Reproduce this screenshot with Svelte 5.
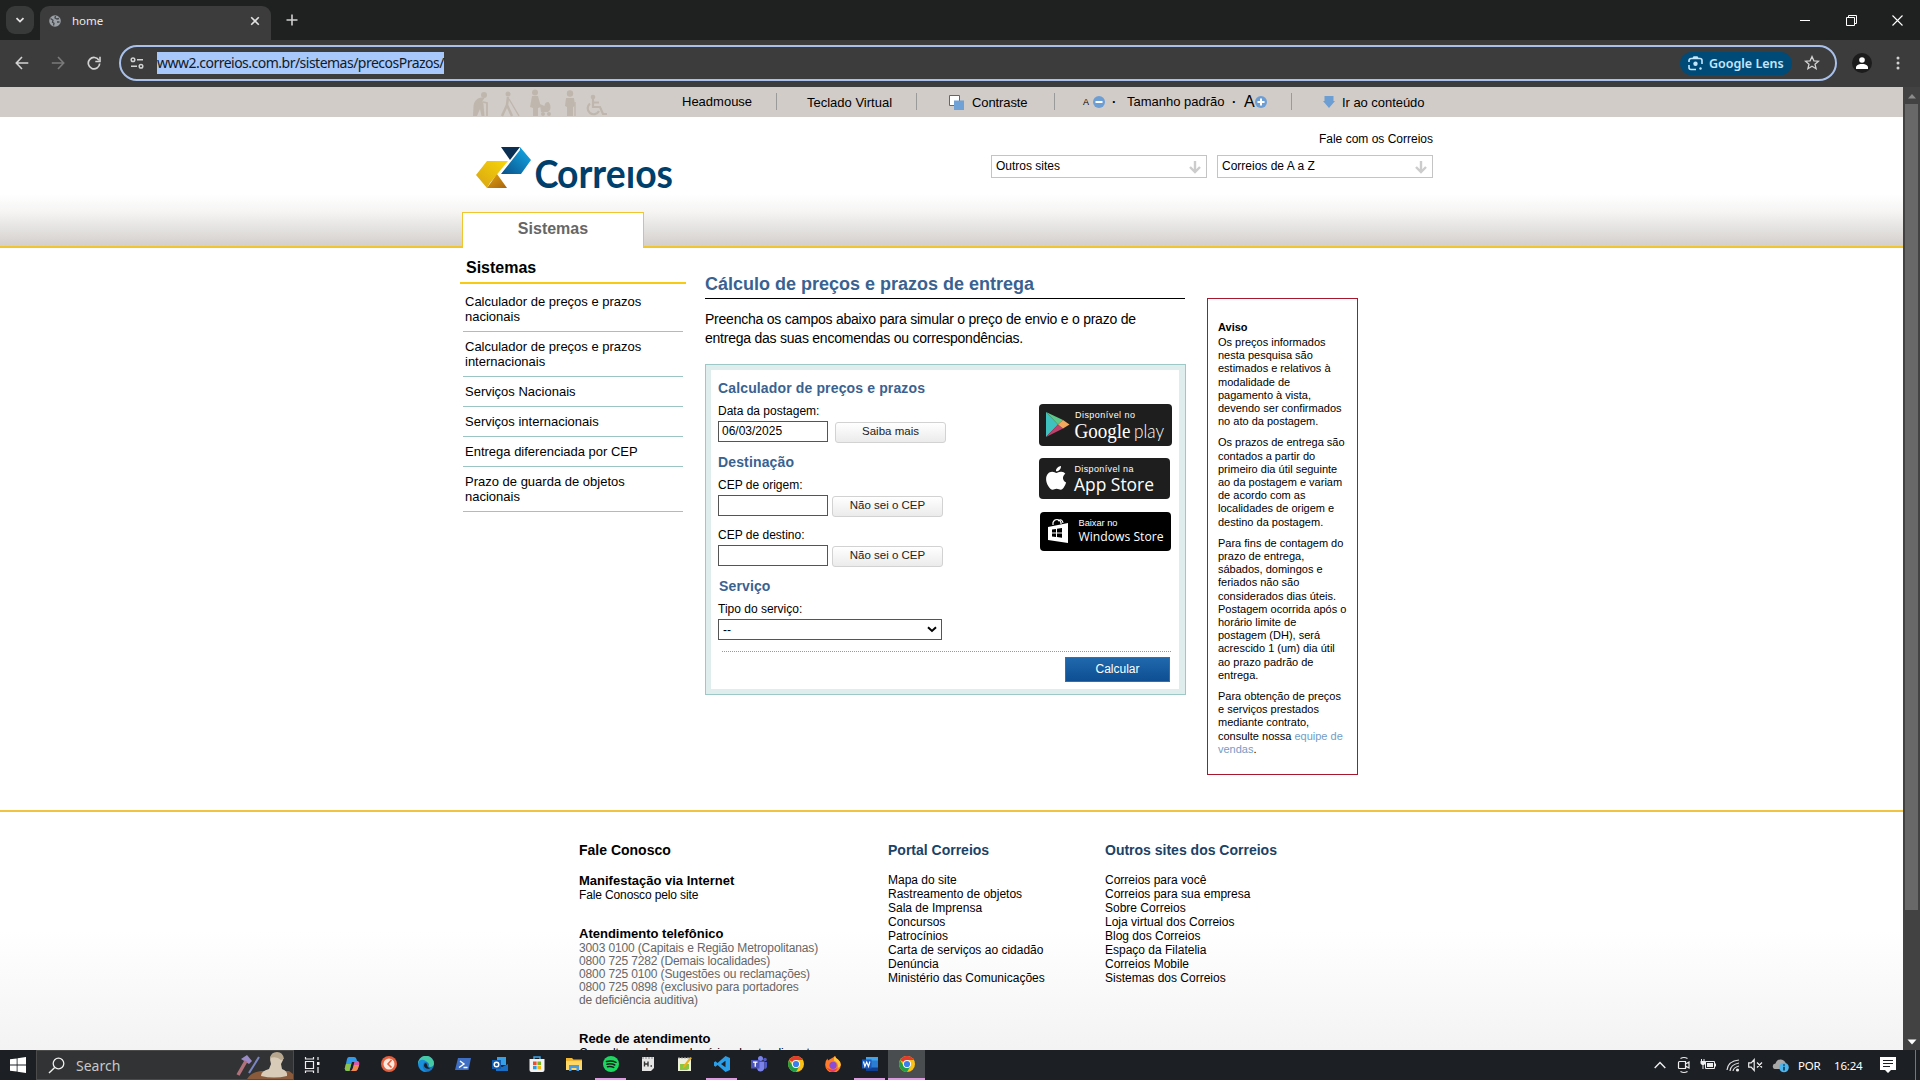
<script>
  const menu = [
    ['Calculador de preços e prazos', 'nacionais'],
    ['Calculador de preços e prazos', 'internacionais'],
    ['Serviços Nacionais'],
    ['Serviços internacionais'],
    ['Entrega diferenciada por CEP'],
    ['Prazo de guarda de objetos', 'nacionais']
  ];
  const notice = [
    ['Os preços informados', 'nesta pesquisa são', 'estimados e relativos à', 'modalidade de', 'pagamento à vista,', 'devendo ser confirmados', 'no ato da postagem.'],
    ['Os prazos de entrega são', 'contados a partir do', 'primeiro dia útil seguinte', 'ao da postagem e variam', 'de acordo com as', 'localidades de origem e', 'destino da postagem.'],
    ['Para fins de contagem do', 'prazo de entrega,', 'sábados, domingos e', 'feriados não são', 'considerados dias úteis.', 'Postagem ocorrida após o', 'horário limite de', 'postagem (DH), será', 'acrescido 1 (um) dia útil', 'ao prazo padrão de', 'entrega.']
  ];
  const phones = ['3003 0100 (Capitais e Região Metropolitanas)', '0800 725 7282 (Demais localidades)', '0800 725 0100 (Sugestões ou reclamações)', '0800 725 0898 (exclusivo para portadores', 'de deficiência auditiva)'];
  const portal = ['Mapa do site', 'Rastreamento de objetos', 'Sala de Imprensa', 'Concursos', 'Patrocínios', 'Carta de serviços ao cidadão', 'Denúncia', 'Ministério das Comunicações'];
  const others = ['Correios para você', 'Correios para sua empresa', 'Sobre Correios', 'Loja virtual dos Correios', 'Blog dos Correios', 'Espaço da Filatelia', 'Correios Mobile', 'Sistemas dos Correios'];
  const apps = [
    { id: 'copilot' }, { id: 'clock' }, { id: 'edge' }, { id: 'shell' }, { id: 'outlook' }, { id: 'store' },
    { id: 'files' }, { id: 'spotify', open: true }, { id: 'hnote' }, { id: 'npp' }, { id: 'code', open: true },
    { id: 'teams' }, { id: 'chrome' }, { id: 'firefox' }, { id: 'word', open: true }, { id: 'chrome', active: true }
  ];
</script>

{#snippet lines(list)}
  {#each list as line, i}{#if i}<br />{/if}{line}{/each}
{/snippet}

<div class="screen">
  <div class="tabs">
    <div class="tabsearch">
      <svg width="10" height="10" viewBox="0 0 10 10"><path d="M1.5 3.2 5 6.6 8.5 3.2" fill="none" stroke="#e3e3e3" stroke-width="1.8" /></svg>
    </div>
    <div class="tab">
      <svg class="globe" width="12" height="12" viewBox="0 0 12 12"><circle cx="6" cy="6" r="5.8" fill="#9aa0a6" /><path d="M1.500 3.500 4 5.200l-.5 2 1.500 1-.5 2.300M6.500 1 6 3l2 1 2-.5M8 7h2.500" fill="none" stroke="#46494c" stroke-width="1.300" /></svg>
      <span class="tabname">home</span>
      <svg width="10" height="10" viewBox="0 0 10 10"><path d="M1.2 1.2l7.6 7.6M8.8 1.2 1.2 8.8" stroke="#e3e3e3" stroke-width="1.6" /></svg>
    </div>
    <svg class="plus" width="12" height="12" viewBox="0 0 12 12"><path d="M6 .5v11M.5 6h11" stroke="#d0d0d0" stroke-width="1.6" /></svg>
    <div class="winbtns">
      <svg width="10" height="11" viewBox="0 0 10 11"><path d="M0 5.5h10" stroke="#fff" /></svg>
      <svg width="11" height="11" viewBox="0 0 11 11"><path d="M.5 2.5h8v8h-8zM2.5 2.5v-2h8v8h-2" fill="none" stroke="#fff" /></svg>
      <svg width="11" height="11" viewBox="0 0 11 11"><path d="M.5.5l10 10M10.5.5l-10 10" stroke="#fff" stroke-width="1.1" /></svg>
    </div>
  </div>

  <div class="toolbar">
    <svg width="14" height="14" viewBox="0 0 14 14"><path d="M7 1 1.3 7 7 13M1.3 7h12" fill="none" stroke="#d2d2d2" stroke-width="1.6" /></svg>
    <svg width="14" height="14" viewBox="0 0 14 14"><path d="M7 1l5.700 6L7 13M12.700 7H.8" fill="none" stroke="#7a7a7a" stroke-width="1.6" /></svg>
    <svg width="14" height="14" viewBox="0 0 14 14"><path d="M12 4.400A5.700 5.700 0 1 0 12.700 7.500" fill="none" stroke="#d2d2d2" stroke-width="1.7" /><path d="M13 .8v4.700H8.300" fill="none" stroke="#d2d2d2" stroke-width="1.6" /></svg>
    <div class="omnibox">
      <svg class="tune" width="14" height="12" viewBox="0 0 14 12"><g fill="none" stroke="#d2d2d2" stroke-width="1.5"><circle cx="3" cy="2.8" r="1.8" /><path d="M7 2.800h6M1 9.200h6" /><circle cx="11" cy="9.2" r="1.8" /></g></svg>
      <span class="url">www2.correios.com.br/sistemas/precosPrazos/</span>
      <div class="lens">
        <svg width="15" height="15" viewBox="0 0 15 15"><g fill="none" stroke="#c2e7ff" stroke-width="1.6"><path d="M1 6V4.500a2 2 0 0 1 2-2h9a2 2 0 0 1 2 2V8M5 2.500 6 1h3l1 1.500M1 9v2.500a2 2 0 0 0 2 2h5" /></g><circle cx="7.5" cy="7.8" r="2.2" fill="#c2e7ff" /><circle cx="12.5" cy="12.5" r="1.2" fill="#c2e7ff" /></svg>
        <span>Google Lens</span>
      </div>
      <svg width="16" height="16" viewBox="0 0 16 16"><path d="M8 1.600l1.900 4.200 4.600.4-3.500 3 1.100 4.500L8 11.300l-4.100 2.400L5 9.200l-3.500-3 4.600-.4z" fill="none" stroke="#d2d2d2" stroke-width="1.3" /></svg>
    </div>
    <div class="avatar"><svg width="12" height="12" viewBox="0 0 12 12" fill="#fff"><circle cx="6" cy="3" r="2.8" /><path d="M0 12V9.500C1.500 7.500 3.500 7 6 7s4.500.5 6 2.500V12z" /></svg></div>
    <svg class="dots" width="4" height="14" viewBox="0 0 4 14" fill="#d2d2d2"><circle cx="2" cy="2" r="1.5" /><circle cx="2" cy="7" r="1.5" /><circle cx="2" cy="12" r="1.5" /></svg>
  </div>

  <div class="view">
    <div class="page">
      <div class="access">
        <svg class="people" width="137" height="28" viewBox="0 0 137 28">
          <g fill="#bfb7ad">
            <circle cx="12" cy="6" r="3" /><path d="M9 8.500Q2 10 1.500 17L1 27h4l3-7 1.500 7h3l-1-12-1-3 2-3z" /><circle cx="36" cy="5" r="2.5" />
            <circle cx="63" cy="3.5" r="3" /><path d="M60 7h6l3 11-3 1v8h-5v-8l-3-1zM68 15l4.500 2q0-4 4-4 3 3 1.500 8l-2 2h-7z" /><circle cx="71" cy="25" r="2" /><circle cx="77" cy="25" r="2" />
            <circle cx="98" cy="4.5" r="3.2" /><path d="M94 9h8l1 8-2 1v9h-6V18l-2-1z" /><circle cx="121" cy="8" r="2.3" />
          </g>
          <g fill="none" stroke="#bfb7ad">
            <path d="M11 13l4 1v13" stroke-width="1.8" /><path d="M36 8l-1 8-5 11M35 16l5 11" stroke-width="2.5" /><path d="M37 10l10 17M103 13v14" stroke-width="1.4" />
            <path d="M118 14.500a6 6 0 1 0 9 7.500M121 10v8h7l3 7h4M121 13.500h6" stroke-width="2.2" />
          </g>
        </svg>
        <span class="a1">Headmouse</span><i></i>
        <span class="a2">Teclado Virtual</span><i></i>
        <svg class="contrast" width="16" height="16" viewBox="0 0 16 16"><path d="M.5.5h10v10H.5z" fill="#fff" stroke="#666" /><path d="M5 5.500h10V15H5z" fill="#6fa0d6" /></svg>
        <span class="a3">Contraste</span><i></i>
        <span class="small">A</span>
        <svg class="minus" width="12" height="12" viewBox="0 0 12 12"><circle cx="6" cy="6" r="6" fill="#6c9ed4" /><path d="M2.500 6h7" stroke="#fff" stroke-width="2" /></svg>
        <b>·</b><span class="a4">Tamanho padrão</span><b class="b2">·</b>
        <span class="big">A</span>
        <svg width="12" height="12" viewBox="0 0 12 12"><circle cx="6" cy="6" r="6" fill="#6c9ed4" /><path d="M2.500 6h7M6 2.500v7" stroke="#fff" stroke-width="2" /></svg>
        <i></i>
        <svg class="down" width="12" height="12" viewBox="0 0 12 12"><path d="M1.500 0h9v5H12L6 12 0 5h1.500z" fill="#6c9ed4" /></svg>
        <span class="a5">Ir ao conteúdo</span>
      </div>

      <header>
        <div class="brandrow">
          <svg class="logo" width="212" height="60" viewBox="0 0 212 60">
            <defs>
              <linearGradient id="y1" x1="0" y1="1" x2="1" y2="0"><stop offset="0" stop-color="#d9a312" /><stop offset="1" stop-color="#f7d60a" /></linearGradient>
              <linearGradient id="o1" x1="0" y1="0" x2="1" y2="1"><stop offset="0" stop-color="#e0a40c" /><stop offset="1" stop-color="#a8640f" /></linearGradient>
              <linearGradient id="bl" x1="0" y1="1" x2="1" y2="0"><stop offset="0" stop-color="#0a4f86" /><stop offset="1" stop-color="#12b0ee" /></linearGradient>
            </defs>
            <path d="M11 15h21L14 37 11 42 0 29z" fill="url(#y1)" />
            <path d="M21 28l10 14H11z" fill="url(#o1)" />
            <path d="M25 1h19L34 14z" fill="#0b2f52" />
            <path d="M44 1 55 14 45 28H25L44 4z" fill="url(#bl)" />
            <g class="word" fill="#003f6b"><text x="58.5" y="41.5" font-size="37.5" textLength="24" lengthAdjust="spacingAndGlyphs">C</text><text x="81" y="41.5" font-size="41" textLength="116" lengthAdjust="spacingAndGlyphs">orreıos</text></g>
          </svg>
          <div class="quick">
            <span class="talk">Fale com os Correios</span>
            <div class="boxes">
              {#each ['Outros sites', 'Correios de A a Z'] as label}
                <div class="box"><span>{label}</span><svg width="12" height="14" viewBox="0 0 12 14"><path d="M6 1v11M1 7l5 5 5-5" fill="none" stroke="#ccc" stroke-width="2.4" /></svg></div>
              {/each}
            </div>
          </div>
        </div>
        <div class="maintab">Sistemas</div>
      </header>

      <div class="content">
        <nav>
          <h2>Sistemas</h2>
          {#each menu as item}<div class="item">{@render lines(item)}</div>{/each}
        </nav>
        <main>
          <h1>Cálculo de preços e prazos de entrega</h1>
          <p class="intro">{@render lines(['Preencha os campos abaixo para simular o preço de envio e o prazo de', 'entrega das suas encomendas ou correspondências.'])}</p>
          <div class="calc">
            <div class="form">
              <div class="fields">
                <h3>Calculador de preços e prazos</h3>
                <label for="data">Data da postagem:</label>
                <div class="row first"><div id="data" class="input">06/03/2025</div><div class="btn">Saiba mais</div></div>
                <h3 class="dest">Destinação</h3>
                <label for="cep1">CEP de origem:</label>
                <div class="row"><div id="cep1" class="input"></div><div class="btn">Não sei o CEP</div></div>
                <label class="gap" for="cep2">CEP de destino:</label>
                <div class="row"><div id="cep2" class="input"></div><div class="btn">Não sei o CEP</div></div>
                <h3 class="serv">Serviço</h3>
                <label for="tipo">Tipo do serviço:</label>
                <div id="tipo" class="select"><span>--</span><svg width="10" height="7" viewBox="0 0 10 7"><path d="M1 1.300 5 5l4-3.700" fill="none" stroke="#000" stroke-width="2" /></svg></div>
              </div>
              <div class="badges">
                <svg width="133" height="42" viewBox="0 0 133 42">
                  <rect width="133" height="42" rx="4" fill="#1e1e1e" />
                  <path d="M7 8v25l12-12.500z" fill="#3fc1c0" /><path d="M7 8l12 12.500 5-4.500z" fill="#5cc98b" /><path d="M7 33l12-12.500 5 4z" fill="#c2406c" /><path d="M24 16l6.500 4.500L24 24.500l-5-4z" fill="#f4a65c" />
                  <text x="36" y="14" font-size="9" textLength="60" class="arial">Disponível no</text>
                  <text x="35.5" y="33.5" font-size="22" textLength="56" class="gserif" lengthAdjust="spacingAndGlyphs">Google</text><text x="95" y="33.5" font-size="19.5" textLength="30" class="thin" lengthAdjust="spacingAndGlyphs">play</text>
                </svg>
                <svg class="b2nd" width="131" height="41" viewBox="0 0 131 41">
                  <rect width="131" height="41" rx="4" fill="#1e1e1e" />
                  <path d="M22 8c.3 3-2.500 5.500-5 5.300C16.700 10.500 19.500 8.200 22 8zM17.500 15c1 0 2.500-1.500 5-1.200 1.500 0 3 .8 3.800 2-3.500 2.500-2.800 7 .8 8.700-1 3-3 7.200-5.300 7.200-1.500 0-2.300-1-4.200-1s-2.500 1-4 1c-3 0-6.500-6.200-6.500-10.500 0-4.700 3-7.400 6-7.400 2 0 3.200 1.200 4.400 1.200z" fill="#fff" />
                  <text x="35.5" y="13.5" font-size="9" textLength="59" class="arial">Disponível na</text>
                  <text x="35" y="32.5" font-size="18.5" textLength="80" class="open" lengthAdjust="spacingAndGlyphs">App Store</text>
                </svg>
                <svg class="b3rd" width="131" height="39" viewBox="0 0 131 39">
                  <rect width="131" height="39" rx="4" fill="#000" />
                  <path d="M8 15l20-4v20L8 28z" fill="#fff" /><path d="M13 13v-2.500q1-3 4-3t4 3V12M18 9q4-3 5 2" fill="none" stroke="#fff" stroke-width="1.2" /><path d="M12 17.500l4-.6v3.600h-4zM17 16.700l5-.8v4.600h-5zM12 21.500h4V25l-4-.5zM17 21.500h5v4.300l-5-.7z" fill="#000" />
                  <text x="38.5" y="14" font-size="9.5" textLength="39" class="arial" lengthAdjust="spacingAndGlyphs">Baixar no</text>
                  <text x="38.5" y="29" font-size="12" textLength="85" class="open" lengthAdjust="spacingAndGlyphs">Windows Store</text>
                </svg>
              </div>
              <div class="submitrow"><div class="submit">Calcular</div></div>
            </div>
          </div>
        </main>
        <aside>
          <h4>Aviso</h4>
          {#each notice as para}<p>{@render lines(para)}</p>{/each}
          <p>{@render lines(['Para obtenção de preços', 'e serviços prestados', 'mediante contrato,', 'consulte nossa '])} <span class="link">equipe de<br />vendas</span>.</p>
        </aside>
      </div>

      <footer>
        <div class="c1">
          <h5 class="black">Fale Conosco</h5>
          <h6>Manifestação via Internet</h6>
          <div class="ln">Fale Conosco pelo site</div>
          <h6 class="tel">Atendimento telefônico</h6>
          <div class="phones">{@render lines(phones)}</div>
          <h6 class="net">Rede de atendimento</h6>
          <div class="ln">Consulte endereços, horários de atendimento</div>
        </div>
        <div class="c2"><h5>Portal Correios</h5><div class="links">{@render lines(portal)}</div></div>
        <div class="c3"><h5>Outros sites dos Correios</h5><div class="links">{@render lines(others)}</div></div>
      </footer>
    </div>
    <div class="scroll">
      <svg width="10" height="6" viewBox="0 0 10 6"><path d="M1 5.500 5 1l4 4.500z" fill="#8b8b8b" /></svg>
      <div class="thumb"></div>
      <svg class="sd" width="10" height="6" viewBox="0 0 10 6"><path d="M.5.5h9L5 5.500z" fill="#fff" /></svg>
    </div>
  </div>

  <div class="taskbar">
    <div class="start"><svg width="16" height="16" viewBox="0 0 16 16" fill="#fff"><path d="M0 2.300 6.700 1.400v6.200H0zM7.500 1.300 16 0v7.600H7.500zM0 8.400h6.700v6.200L0 13.700zM7.500 8.400H16V16l-8.500-1.300z" /></svg></div>
    <div class="search">
      <svg width="17" height="17" viewBox="0 0 17 17"><circle cx="10.5" cy="6.5" r="5.3" fill="none" stroke="#eee" stroke-width="1.3" /><path d="M6.700 10.400 1 16" stroke="#eee" stroke-width="1.4" /></svg>
      <span>Search</span>
      <svg class="bust" width="58" height="28" viewBox="0 0 58 28">
        <path d="M6 8l6-4 5 6-3 3z" fill="#9b8bc9" /><path d="M11 10 3 24" stroke="#b0727a" stroke-width="3.5" /><path d="M24 6 14 22" stroke="#7a86c4" stroke-width="2" />
        <path d="M12 28q4-7 14-8h28l4 3v5z" fill="#8a5a3c" /><path d="M26 25q0-5 8-7l2-5q-3-9 4-11 8-1 8 7l-2 4 1 5q6 2 5 7-13 3-26 0z" fill="#d8cbb8" /><path d="M35 7q1-6 7-6t7 7l-3 1q-4-4-11-2z" fill="#b7a78f" />
      </svg>
    </div>
    <div class="tv"><svg width="16" height="16" viewBox="0 0 16 16"><path d="M1.500 4.500h8v7h-8zM1.500 0v2h8V0M1.500 16v-2h8v2M14 0v3M14 10v6" fill="none" stroke="#eee" stroke-width="1.2" /><path d="M13 5h2.500v3H13z" fill="#eee" /></svg></div>
    {#each apps as app}
      <div class="app" class:open={app.open} class:active={app.active}>
        <svg width="16" height="16" viewBox="0 0 16 16">
          {#if app.id === 'copilot'}
            <path d="M5 1h5q2 0 2.500 2l.8 3H8L5.500 15H3q-2 0-2.200-2L3 3q.5-2 2-2z" fill="#2f9bea" /><path d="M2 8h5l-1.500 7H3q-2 0-2.300-2.500z" fill="#8bc34a" /><path d="M11 15H6q2 0 2.600-2L10.600 5H14q2 1 1.300 3.500l-1.500 4.500q-.8 2-2.800 2z" fill="#d95aa8" /><path d="M10 9h5l-1.200 4q-.8 2-2.800 2H6q2 0 2.600-2z" fill="#f28c4b" />
          {:else if app.id === 'clock'}
            <circle cx="8" cy="8" r="8" fill="#e5603f" /><circle cx="8" cy="8" r="5.5" fill="#fbe9df" /><path d="M10.500 4 7 8l3.500 3.500" fill="none" stroke="#e5603f" stroke-width="1.6" />
          {:else if app.id === 'edge'}
            <circle cx="8" cy="8" r="8" fill="#1577c8" /><path d="M0 8a8 8 0 0 1 16-.5c0 3-3 4-5.500 3 1.500-3-1-5-3.500-5S1 6.500 0 8z" fill="#46c9a5" /><path d="M7 7q2 0 2 2t3 3.500q-3 1-5-1T7 7z" fill="#1b1f24" /><path d="M1 5a8 8 0 0 0 7 11Q4 13 5 9t4-3Q5 2 1 5z" fill="#1a8fdb" />
          {:else if app.id === 'shell'}
            <path d="M3 2h13l-2.500 12H0z" fill="#3f6fc4" /><path d="M5 5l4 3-5 3.500M8.500 11.500h4" fill="none" stroke="#fff" stroke-width="1.4" />
          {:else if app.id === 'outlook'}
            <path d="M5 1h9v8H5z" fill="#35a0e8" /><path d="M4 8l6 3 6-3v7H4z" fill="#1a6fc4" /><path d="M0 4h9v9H0z" fill="#0f5cb0" /><circle cx="4.5" cy="8.5" r="2.3" fill="none" stroke="#fff" stroke-width="1.4" />
          {:else if app.id === 'store'}
            <path d="M.5 3h15v11q0 2-2 2h-11q-2 0-2-2z" fill="#f2f2f2" /><path d="M5 3V1h6v2" fill="none" stroke="#45a8e6" stroke-width="1.4" /><path d="M4 5.500h3.600V9H4z" fill="#e8502f" /><path d="M8.400 5.500H12V9H8.400z" fill="#7ab51d" /><path d="M4 9.800h3.600v3.500H4z" fill="#2a9de0" /><path d="M8.400 9.800H12v3.500H8.400z" fill="#f6b40f" />
          {:else if app.id === 'files'}
            <path d="M0 2h6l1.500 1.500H16V14H0z" fill="#f2b632" /><path d="M0 5h16v9H0z" fill="#ffd766" /><path d="M3 15V9h10v6h-2.500v-3h-5v3z" fill="#4a9be0" />
          {:else if app.id === 'spotify'}
            <circle cx="8" cy="8" r="8" fill="#1ed760" /><path d="M3.500 5.500q5-1.500 9.500.8M4 8.200q4-1 7.800.8M4.500 10.700q3.400-.8 6.200.7" fill="none" stroke="#14201a" stroke-width="1.5" stroke-linecap="round" />
          {:else if app.id === 'hnote'}
            <path d="M2 1h12v11l-3 3H2z" fill="#e4e4e4" /><path d="M4.500 5.500v5M8 5.500v5M4.500 8H8M10.500 10h1.500" stroke="#333" stroke-width="1.4" /><path d="M3 1v2M6 1v2M9 1v2M12 1v2" stroke="#888" />
          {:else if app.id === 'npp'}
            <path d="M1 2h13v13H1z" fill="#f0f0e0" /><path d="M3 8h9v5l-2 1H3z" fill="#8cc63e" /><path d="M15 2 8 11l-2 1 .5-2.500L13 1z" fill="#e8b21c" /><path d="M2 1v2M5 1v2M8 1v2M11 1v2" stroke="#aaa" />
          {:else if app.id === 'code'}
            <path d="M11.500 0 16 2v12l-4.500 2L3.500 9 1.500 10.700 0 9.800V6.200l1.500-.9L3.500 7zM11.500 4.800 7 8l4.500 3.200z" fill="#2a9ee8" fill-rule="evenodd" />
          {:else if app.id === 'teams'}
            <circle cx="9.5" cy="2.5" r="2.5" fill="#7b83eb" /><circle cx="14" cy="3.5" r="1.8" fill="#5059c9" /><path d="M6 5.500h7.500V12q-1 3.500-4 3.500T6 12z" fill="#7b83eb" /><path d="M13.500 6H16v5q-.5 2-2.500 2z" fill="#5059c9" /><path d="M0 4h8.500v8.500H0z" fill="#4b53bc" /><path d="M2 6.200h4.500M4.250 6.200v4.600" stroke="#fff" stroke-width="1.3" />
          {:else if app.id === 'chrome'}
            <circle cx="8" cy="8" r="8" fill="#fbc116" /><path d="M8 8 1.100 4A8 8 0 0 1 15 4H8z" fill="#e33b2e" /><path d="M8 8l3.500 2L8 16A8 8 0 0 1 1.100 4L4.600 10z" fill="#229e48" /><circle cx="8" cy="8" r="4" fill="#fff" /><circle cx="8" cy="8" r="3.1" fill="#3b7fee" />
          {:else if app.id === 'firefox'}
            <path d="M8 1.500Q9 .5 10 0q.5 2 3 3.500Q16 6 15.800 9A7.800 7.800 0 0 1 .2 9Q0 5 2.500 2.500L3 4.500Q5 3 8 1.500z" fill="#ff7a2a" /><path d="M10 0q.5 2 3 3.500Q16 6 15.800 9q-1 3-3 2.500 1-5-4-7Q8.500 2 10 0z" fill="#ffc83a" /><circle cx="8" cy="9.3" r="3.6" fill="#8a4bd6" /><path d="M.3 10q1.700 3 5.700 3.500t6.500-1.500q-2 4-5 4T.3 10z" fill="#f0384f" />
          {:else if app.id === 'word'}
            <path d="M4 1h12v14H4z" fill="#2b7cd3" /><path d="M4 1h12v3.500H4z" fill="#41a5ee" /><path d="M4 11.500h12V15H4z" fill="#103f91" /><path d="M0 3.500h9.500v9H0z" fill="#185abd" /><path d="M1.500 5.500l1.400 5 1.800-4.500 1.800 4.500 1.400-5" fill="none" stroke="#fff" stroke-width="1.2" />
          {/if}
        </svg>
      </div>
    {/each}
    <div class="tray">
      <svg width="12" height="8" viewBox="0 0 12 8"><path d="M.7 7 6 1.500 11.300 7" fill="none" stroke="#eee" stroke-width="1.4" /></svg>
      <svg class="cam" width="14" height="18" viewBox="0 0 14 18"><path d="M2.500 5.500h6v7h-6q-1 0-1-1v-5q0-1 1-1zM8.500 8l3.500-2v6l-3.500-2M3.500 2.500q3.500-2 7 0M3.500 15.500q3.500 2 7 0" fill="none" stroke="#eee" stroke-width="1.2" /></svg>
      <svg class="bat" width="16" height="14" viewBox="0 0 16 14"><path d="M5.500 3.500h9v7h-9z" fill="none" stroke="#eee" /><path d="M7 5h6v4H7zM15 5.500h1v3h-1zM.5 3h5v2.500l-1.500 1.500H2L.5 5.500z" fill="#eee" /><path d="M1.500 1v2M4 1v2M3 7v4" stroke="#eee" /></svg>
      <svg class="wifi" width="14" height="14" viewBox="0 0 14 14"><path d="M1 12Q2 3 13 2M4 13q.5-6.500 9-8M7 13q.5-3.500 6-5" fill="none" stroke="#ddd" stroke-width="1.2" /><circle cx="11.5" cy="12" r="1.6" fill="#eee" /></svg>
      <svg class="vol" width="15" height="14" viewBox="0 0 15 14"><path d="M.7 4.800h2.500l3-3.300v11l-3-3.300H.7zM9 4.500l5 5M14 4.500l-5 5" fill="none" stroke="#eee" stroke-width="1.2" /></svg>
      <svg class="cloud" width="17" height="15" viewBox="0 0 17 15"><path d="M1 9.500Q0 6 3.500 5.500 5 1 9 1.500t5 4.500q1 4-1 5H3Q1.500 11 1 9.500z" fill="#a8a8a8" /><circle cx="12" cy="9.5" r="4.8" fill="#4db5ee" /><path d="M12 6.200v1.500M12 8.700v3.800" stroke="#06324e" stroke-width="1.5" /></svg>
      <span class="por">POR</span><span class="time">16:24</span>
      <svg class="note" width="16" height="16" viewBox="0 0 16 16"><path d="M0 0h16v13h-5l-3 3-3-3H0z" fill="#fff" /><path d="M3 3.500h10M3 6.500h10M3 9.500h7" stroke="#1c1f24" stroke-width="1.1" /></svg>
      <i></i>
    </div>
  </div>
</div>

<style>
  :global(body) { margin: 0; overflow: hidden; }
  .screen { width: 1920px; height: 1080px; overflow: hidden; display: flex; flex-direction: column; font-family: "Liberation Sans", Arial, sans-serif; background: #fff; color: #000; }
  svg { display: block; flex: none; }
  h1, h2, h3, h4, h5, h6, p { margin: 0; }

  .tabs { height: 40px; flex: none; background: #1f2120; display: flex; align-items: center; font-family: "Noto Sans", sans-serif; }
  .tabsearch { width: 28px; height: 28px; margin-left: 6px; border-radius: 9px; background: #383a39; display: flex; align-items: center; justify-content: center; }
  .tab { width: 211px; height: 34px; align-self: flex-end; margin-left: 6px; padding: 0 11px 0 9px; border-radius: 9px 9px 0 0; background: #3c3c3c; color: #e8e8e8; display: flex; align-items: center; }
  .tab svg { margin-top: -5px; }
  .tabname { flex: 1; margin: -5px 0 0 11px; font-size: 11.5px; }
  .plus { margin-left: 15px; }
  .winbtns { margin-left: auto; display: flex; gap: 35.5px; padding-right: 17px; }
  .toolbar { height: 47px; flex: none; background: #3c3c3c; display: flex; align-items: center; padding-left: 15px; gap: 22px; box-sizing: border-box; padding-bottom: 1px; }
  .omnibox { width: 1718px; height: 36px; box-sizing: border-box; border: 2px solid #a8c0ea; border-radius: 18px; margin: 0 0 0 -4px; display: flex; align-items: center; padding: 0 15px 0 9px; }
  .url { margin-left: 13px; background: #a8c7fa; color: #101a28; font: 14px/22px "Noto Sans", sans-serif; letter-spacing: -0.51px; }
  .lens { margin: 0 12px 0 auto; height: 23px; width: 112px; box-sizing: border-box; padding-left: 8px; border-radius: 12px; background: #004a77; color: #c2e7ff; display: flex; align-items: center; gap: 6px; font: 600 12.5px "Noto Sans", sans-serif; white-space: nowrap; }
  .avatar { width: 20px; height: 20px; margin-left: -7px; border-radius: 50%; background: #1c1c1c; display: flex; align-items: center; justify-content: center; }
  .dots { margin-left: 2px; }

  .view { height: 963px; flex: none; display: flex; }
  .page { width: 1903px; overflow: hidden; }
  .scroll { width: 17px; background: #424242; display: flex; flex-direction: column; align-items: center; padding-top: 6px; box-sizing: border-box; }
  .thumb { width: 13px; height: 806px; margin-top: 5px; background: #686868; }
  .sd { margin: auto 0 5px; }

  .access { height: 30px; background: #d1ccc8; display: flex; align-items: center; font-size: 13px; line-height: 15px; white-space: nowrap; }
  .access i { width: 1px; height: 17px; background: #9a9a9a; margin-bottom: 1px; }
  .people { margin: 2px 0 0 472px; }
  .a1 { width: 71px; margin: 0 23px 2px 73px; }
  .a2 { width: 85px; margin: 0 24px 0 30px; }
  .contrast { margin: 1px 7px 0 32px; }
  .a3 { width: 56px; margin-right: 26px; letter-spacing: -0.1px; }
  .small { font-size: 9px; margin-left: 28px; width: 6px; }
  .minus { margin-left: 4px; }
  .access b { width: 4px; margin: 0 0 2px 7px; }
  .a4 { width: 97px; margin: 0 0 2px 11px; }
  .access .b2 { margin-left: 8px; }
  .big { font-size: 16px; width: 10px; margin: 0 1px 1px 8px; }
  .access svg + i { margin-left: 24px; }
  .down { margin: 0 7px 0 31px; }
  .a5 { letter-spacing: -0.05px; }

  header { height: 129px; border-bottom: 2px solid #f0c530; background: linear-gradient(#fff 0 60%, #f5f4f3 74%, #d3cfcc); display: flex; flex-direction: column; padding-left: 462px; }
  .brandrow { height: 95px; flex: none; display: flex; align-items: flex-start; }
  .logo { margin: 29px 0 0 14px; }
  .word { font-family: Lato, sans-serif; font-weight: 700; }
  .quick { width: 442px; margin: 15px 0 0 303px; display: flex; flex-direction: column; }
  .talk { align-self: flex-end; font-size: 12px; line-height: 14px; }
  .boxes { display: flex; gap: 10px; margin-top: 9px; }
  .box { width: 216px; height: 23px; box-sizing: border-box; border: 1px solid #c4c4c4; background: #fff; display: flex; align-items: center; justify-content: space-between; padding: 0 5px 0 4px; font-size: 12px; }
  .box span { margin-top: -2px; }
  .maintab { flex: none; width: 182px; height: 36px; box-sizing: border-box; border: 1px solid #f0c530; border-bottom: 0; background: #fff; color: #666; font: bold 16px/31px "Liberation Sans", Arial, sans-serif; text-align: center; }

  .content { height: 562px; display: flex; padding-left: 460px; align-items: flex-start; }
  nav { width: 226px; }
  nav h2 { height: 36px; padding: 0 0 0 6px; box-sizing: border-box; border-bottom: 2px solid #f7cb14; font-size: 16px; line-height: 39px; margin-bottom: 3px; }
  .item { width: 218px; margin-left: 3px; padding: 7px 0 7px 2px; border-bottom: 1px solid #9cc4c4; font-size: 13px; line-height: 15px; }
  main { width: 481px; margin-left: 19px; }
  h1 { height: 51px; box-sizing: border-box; padding-top: 26px; border-bottom: 1px solid #000; margin-right: 1px; color: #396291; font-size: 18px; line-height: 21px; white-space: nowrap; }
  .intro { margin-top: 11px; height: 54px; font-size: 14px; line-height: 19px; letter-spacing: -0.235px; white-space: nowrap; }
  .calc { height: 331px; box-sizing: border-box; border: 1px solid #9cc8c8; padding: 5px 6px 5px 5px; background: #dfeeed; }
  .form { height: 319px; background: #fff; display: grid; grid-template: 281px 38px / 320px 1fr; padding: 0 9px 0 7px; }
  h3 { color: #396291; font-size: 14px; line-height: 16px; margin-top: 10px; letter-spacing: 0.14px; }
  label { display: block; font-size: 12px; line-height: 14px; margin-top: 8px; }
  .row { display: flex; gap: 4px; margin-top: 3px; }
  .first { gap: 7px; }
  .input { width: 110px; height: 21px; box-sizing: border-box; border: 1px solid #555; padding-left: 3px; font-size: 12px; line-height: 18px; }
  .btn { width: 111px; height: 21px; margin-top: 1px; box-sizing: border-box; border: 1px solid #d2d2d2; border-radius: 3px; background: linear-gradient(#fff, #ebebeb); font-size: 11.5px; line-height: 17px; text-align: center; color: #222; }
  .dest { margin-top: 11px; }
  .serv { margin: 11px 0 0 1px; }
  .gap { margin-top: 11px; }
  .select { width: 224px; height: 21px; margin-top: 3px; box-sizing: border-box; border: 1px solid #555; display: flex; align-items: center; justify-content: space-between; padding: 0 4px; font-size: 12px; }
  .badges { padding: 34px 0 0 1px; }
  .b2nd { margin-top: 12px; }
  .b3rd { margin: 13px 0 0 1px; }
  .badges text { fill: #fff; }
  .arial { font-family: "Liberation Sans", sans-serif; }
  .gserif { font-family: "Liberation Serif", serif; }
  .thin { font-family: Lato, sans-serif; font-weight: 300; }
  .badges .open { font-family: "Open Sans", sans-serif; border: 0; }
  .submitrow { grid-column: 1 / 3; margin: 0 1px 0 4px; border-top: 1px dotted #999; display: flex; justify-content: flex-end; align-items: flex-start; padding-top: 5px; }
  .submit { width: 105px; height: 25px; margin-right: 1px; box-sizing: border-box; border: 1px solid #4a6a8c; background: linear-gradient(#2068ac, #0d4f92); color: #fff; font-size: 12px; line-height: 22px; text-align: center; }
  aside { width: 151px; height: 477px; box-sizing: border-box; border: 1px solid #a8182c; margin: 50px 0 0 21px; padding: 22px 0 0 10px; font-size: 11px; line-height: 13.2px; white-space: nowrap; }
  h4 { font-size: 11px; line-height: 13px; margin-bottom: 2px; }
  aside p { margin-bottom: 8px; }
  .link { color: #739cc6; }

  footer { height: 238px; border-top: 2px solid #f0c440; background: linear-gradient(#fff 0 50%, #f3f3f3 100%); padding-left: 579px; display: flex; font-size: 12px; line-height: 14px; white-space: nowrap; }
  .c1 { width: 309px; }
  .c2 { width: 217px; }
  h5 { font-size: 14px; line-height: 16px; margin: 30px 0 15px; color: #1b4266; }
  .black { color: #000; }
  h6 { font-size: 13px; line-height: 15px; }
  .ln { letter-spacing: -0.13px; }
  .tel, .net { margin-top: 24px; }
  .phones { margin-top: 1px; color: #666; line-height: 13px; letter-spacing: -0.13px; }

  .taskbar { height: 30px; flex: none; background: #1c1f24; display: flex; align-items: center; font-family: "Noto Sans", sans-serif; color: #fff; }
  .start { width: 36px; display: flex; justify-content: center; }
  .search { width: 258px; height: 30px; box-sizing: border-box; background: #323334; border: 1px solid #4b4b4b; display: flex; align-items: center; padding-left: 11px; font-size: 14px; color: #c8c8c8; }
  .search span { margin-left: 11px; flex: 1; }
  .tv { width: 35px; margin-right: 4px; display: flex; justify-content: center; }
  .app { width: 37px; height: 30px; box-sizing: border-box; display: flex; align-items: center; justify-content: center; flex: none; border-bottom: 2px solid transparent; }
  .app.open { border-image: linear-gradient(90deg, transparent 4px, #dc9be0 4px 33px, transparent 33px) 1; border-style: solid; border-width: 0 0 2px; }
  .active { background: #4a4d50; border-bottom-color: #dc9be0; }
  .tray { margin-left: auto; display: flex; align-items: center; }
  .cam { margin-left: 11px; }
  .bat { margin-left: 9px; }
  .wifi { margin-left: 10px; }
  .vol { margin-left: 8px; }
  .cloud { margin-left: 9px; }
  .por, .time { font-size: 11.5px; letter-spacing: -0.2px; }
  .por { margin-left: 9px; width: 24px; }
  .time { margin-left: 12px; width: 28px; }
  .note { margin-left: 18px; }
  .tray i { width: 1px; height: 30px; margin: 0 4px 0 19px; background: #74777a; }
</style>
